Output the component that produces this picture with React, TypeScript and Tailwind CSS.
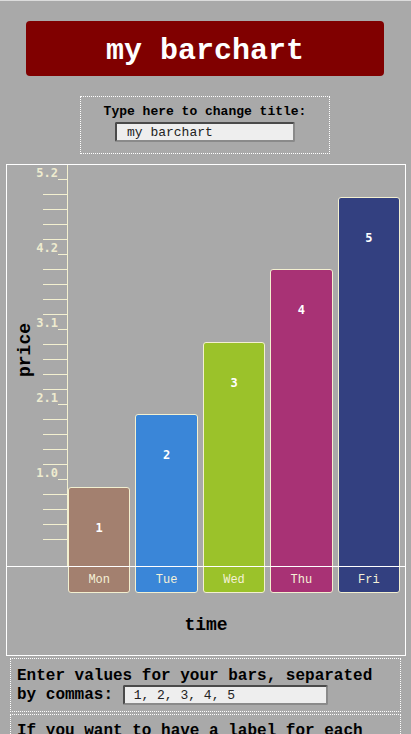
import React from 'react';

const values = [1, 2, 3, 4, 5];
const days = ['Mon', 'Tue', 'Wed', 'Thu', 'Fri'];
const barColors = ['bg-[#a3806f]', 'bg-[#3a86d8]', 'bg-[#9bc22a]', 'bg-[#a83275]', 'bg-[#334080]'];
const tickLabels: Record<number, string> = { 0: '5.2', 5: '4.2', 10: '3.1', 15: '2.1', 20: '1.0' };

const inputCls =
  'rounded-[2px] border-2 border-t-[#4a4a4a] border-l-[#4a4a4a] border-b-[#8a8a8a] border-r-[#8a8a8a] bg-[#eeeeee] text-[13px] font-normal text-[#222] outline-none';

const App = () => {
  return (
    <div className="min-h-[734px] bg-[#a9a9a9] font-['Liberation_Mono','Courier_New',monospace] text-black">
      <div className="h-px bg-[#dcdcdc]" />

      {/* title */}
      <div className="ml-[26px] mt-[20px] flex h-[55px] w-[358px] items-center justify-center rounded-[4px] bg-[#800000] pt-[5px]">
        <h1 className="text-[30px] font-bold leading-none text-white">my barchart</h1>
      </div>

      <div className="ml-[80px] mt-[20px] flex h-[58px] w-[250px] flex-col items-center border border-dotted border-white pt-[7px]">
        <label className="text-[13px] font-bold leading-[15px]">Type here to change title:</label>
        <input className={`${inputCls} mt-[3px] h-[20px] w-[180px] pl-[10px]`} defaultValue="my barchart" />
      </div>

      {/* chart */}
      <div className="ml-[6px] mt-[10px] w-[400px] border border-white">
        <div className="relative flex items-start">
          <div className="flex h-[401px] w-[36px] items-center justify-center pb-[30px]">
            <span className="rotate-180 text-[18px] font-bold leading-none [writing-mode:vertical-rl]">price</span>
          </div>
          <div className="flex h-[401px] w-[25px] flex-col border-r border-[#f3f0d0]">
            {Array.from({ length: 25 }, (_, i) =>
              tickLabels[i] ? (
                <div key={i} className="flex h-[15px] shrink-0 items-end justify-end">
                  <span className="mb-[1px] whitespace-nowrap font-['DejaVu_Sans_Mono',monospace] text-[12px] font-bold leading-[12px] text-[#eeebcf]">
                    {tickLabels[i]}
                  </span>
                  <span className="h-full w-[9px] shrink-0 border-b border-[#f3f0d0]" />
                </div>
              ) : (
                <div key={i} className="h-[15px] shrink-0 border-b border-[#f3f0d0]" />
              )
            )}
          </div>
          <div className="grid h-[428px] flex-1 grid-cols-5 items-end">
            {values.map((v, i) => (
              <div key={days[i]} className="pr-[5px]">
                <div
                  className={`flex flex-col items-center rounded-[3px] border border-[#f3f0d0] ${barColors[i]}`}
                  style={{ height: Math.round(33.5 + v * 72.5) }}
                >
                  <span className="pt-[32px] font-['DejaVu_Sans_Mono',monospace] text-[12px] font-bold leading-[16px] text-white">
                    {v}
                  </span>
                  <span className="mt-auto flex h-[25px] items-center text-[12px] leading-none text-[#f5f1d6]">{days[i]}</span>
                </div>
              </div>
            ))}
          </div>
          <div className="absolute left-0 right-0 top-[401px] h-px bg-white" />
        </div>
        <div className="pb-[19px] pt-[21px] text-center text-[18px] font-bold leading-[22px]">time</div>
      </div>

      {/* inputs */}
      <div className="ml-[10px] mt-[2px] h-[54px] w-[391px] border border-dotted border-white pl-[6px] pr-[8px] pt-[8px] text-[16px] font-bold leading-[18px]">
        Enter values for your bars, separated by commas:{' '}
        <input className={`${inputCls} inline-block h-[20px] w-[205px] pl-[9px] align-middle`} defaultValue="1, 2, 3, 4, 5" />
      </div>
      <div className="ml-[10px] mt-[2px] h-[60px] w-[391px] border border-dotted border-white pl-[6px] pr-[8px] pt-[7px] text-[16px] font-bold leading-[18px]">
        If you want to have a label for each bar, enter them here:
      </div>
    </div>
  );
};

export default App;
